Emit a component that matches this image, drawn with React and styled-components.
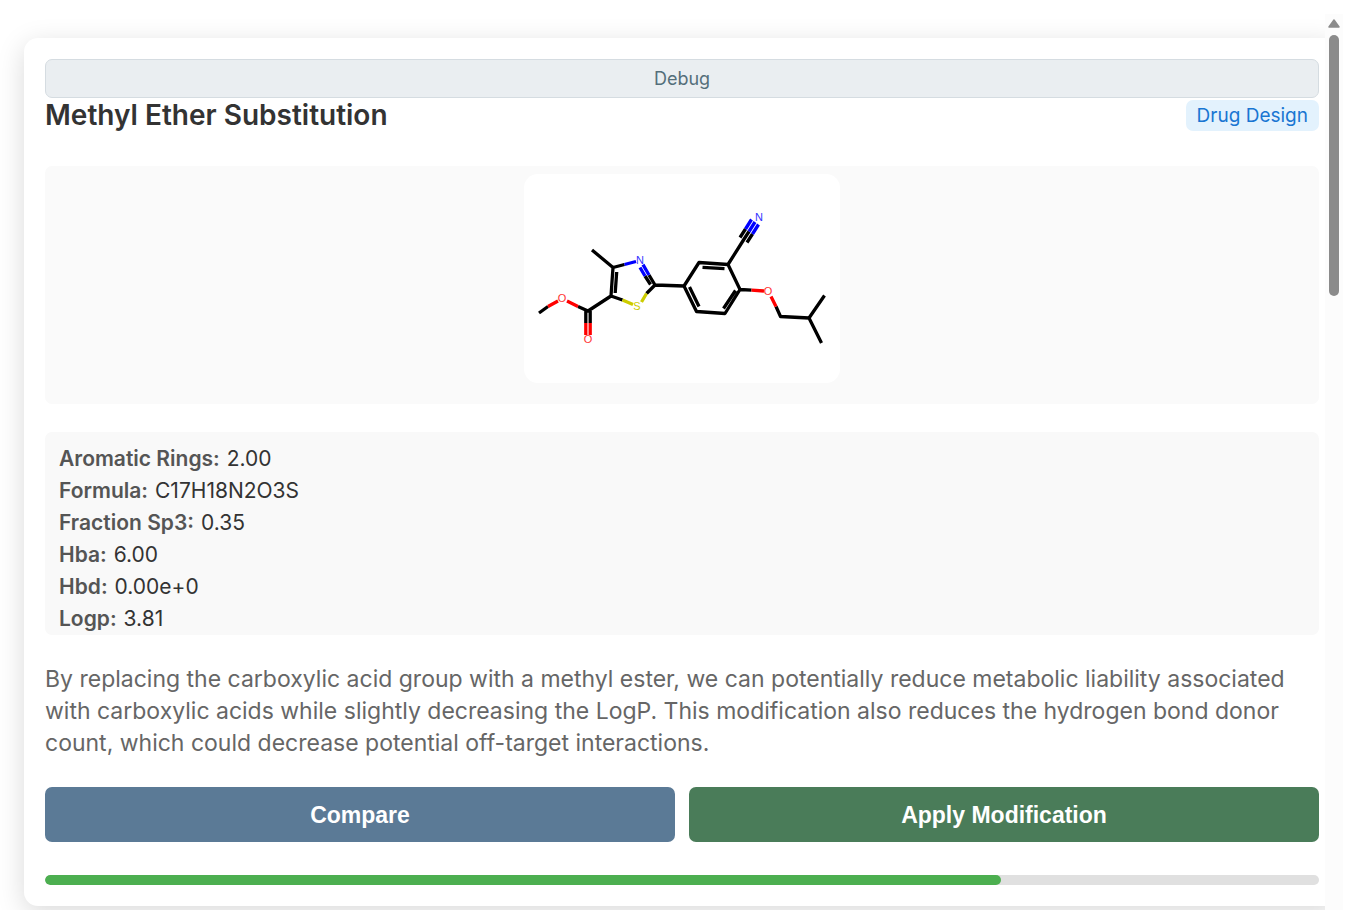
import React from "react";
import styled, { createGlobalStyle } from "styled-components";

const GlobalStyle = createGlobalStyle`
  *, *::before, *::after { box-sizing: border-box; }
  body {
    margin: 0;
    background: #ffffff;
    font-family: Inter, "Liberation Sans", sans-serif;
    color: #333333;
  }
`;

const Page = styled.div`
  display: flex;
  height: 100vh;
  padding-right: 19px;
  overflow: hidden;
`;

const Pane = styled.main`
  flex: 1;
  min-width: 0;
  padding: 38px 0 24px 24px;
  overflow: hidden;
`;

const ScrollTrack = styled.div`
  display: flex;
  flex-direction: column;
  align-items: center;
  width: 18px;
  margin-top: 14px;
  padding-top: 5px;
  gap: 7px;
  background: #fcfcfc;
`;

const ScrollThumb = styled.div`
  width: 10px;
  height: 261px;
  border-radius: 5px;
  background: #8b8b8b;
`;

const Card = styled.article`
  display: flex;
  flex-direction: column;
  margin-right: -15px;
  padding: 21px;
  border-radius: 14px;
  background: #ffffff;
  box-shadow: 0 7px 28px rgba(0, 0, 0, 0.15);
`;

const DebugButton = styled.button`
  height: 39px;
  padding: 0;
  border: 1px solid #d5dce1;
  border-radius: 7px;
  background: #eaeef1;
  color: #546e7a;
  font: 400 18px/24px Inter, sans-serif;
`;

const Header = styled.header`
  display: flex;
  align-items: center;
  justify-content: space-between;
  margin-bottom: 33px;
`;

const Title = styled.h3`
  margin: 0;
  font-size: 28px;
  line-height: 35px;
  font-weight: 600;
`;

const Badge = styled.span`
  padding: 3px 11px;
  border-radius: 7px;
  background: #e3f2fd;
  color: #1976d2;
  font-size: 19px;
  line-height: 25px;
`;

const Figure = styled.figure`
  display: flex;
  justify-content: center;
  margin: 0 0 28px;
  padding: 8px 0 21px;
  border-radius: 7px;
  background: #fafafa;
`;

const Structure = styled.svg`
  display: block;
  width: 316px;
  height: 209px;
  border-radius: 14px;
  background: #ffffff;
`;

const Properties = styled.dl`
  margin: 0 0 28px;
  padding: 11px 14px 0;
  border-radius: 7px;
  background: #f9f9f9;
  font-size: 21px;
  line-height: 32px;
`;

const Property = styled.div`
  display: flex;
  gap: 7px;
`;

const Term = styled.dt`
  color: #555555;
  font-weight: 600;
`;

const Value = styled.dd`
  margin: 0;
`;

const Description = styled.p`
  margin: 0 0 28px;
  color: #666666;
  font-size: 23px;
  line-height: 32px;
`;

const Actions = styled.div`
  display: flex;
  gap: 14px;
  margin-bottom: 33px;
`;

const ActionButton = styled.button`
  flex: 1;
  height: 55px;
  padding: 0;
  border: 0;
  border-radius: 7px;
  background: ${(p) => (p.$primary ? "#4a7c59" : "#5b7a96")};
  color: #ffffff;
  font: 700 23px/28px "Liberation Sans", Arial, sans-serif;
`;

const Progress = styled.div`
  height: 10px;
  border-radius: 5px;
  background: #e0e0e0;
  overflow: hidden;
`;

const ProgressFill = styled.div`
  height: 100%;
  border-radius: 5px;
  background: #4caf50;
`;

const properties = [
  ["Aromatic Rings", "2.00"],
  ["Formula", "C17H18N2O3S"],
  ["Fraction Sp3", "0.35"],
  ["Hba", "6.00"],
  ["Hbd", "0.00e+0"],
  ["Logp", "3.81"],
];

const bonds = [
  {
    color: "#000000",
    d: "M68 76L89 93.5L87 122L64 137L54 132.5M92.7 98L91.2 119M89 93.5L100.5 90.5M87 122L98.5 126M131 111L122.5 119.5M131 111L125 101M126.5 110.5L121 102M15 139L24 132.5M61.8 137V149M66.2 137V149M131 111L160 112L175 88.5L204 90.5L216 115.5L201 139.5L172.5 137.5L160 112M178.5 93.3L200.5 94.7M165.5 113L175 132.5M211.5 116.5L199.5 134.5M204 90.5L219.5 66L225 57.5M216 63.5L221.5 55M223 68.5L228.5 60M216 115.5L227.5 116.2M252 132.5L256.5 142.5L285 144L300.5 121.5M285 144L297.5 169",
  },
  {
    color: "#0000ff",
    d: "M100.5 90.5L112 87.5M125 101L119 90.7M121 102L116 93.5M225 57.5L231 48M221.5 55L227.5 45.5M228.5 60L234.5 50.5",
  },
  {
    color: "#ff0000",
    d: "M24 132.5L34 127M43 127L54 132.5M61.8 149V161M66.2 149V161M227.5 116.2L240 117M247 122.5L252 132.5",
  },
  { color: "#cccc00", d: "M98.5 126L109 130.5M122.5 119.5L117.5 128" },
];

const atoms = [
  { label: "N", x: 116, y: 90, color: "#3333ff" },
  { label: "S", x: 113, y: 136, color: "#cccc00" },
  { label: "O", x: 38, y: 128, color: "#ff3333" },
  { label: "O", x: 64, y: 169, color: "#ff3333" },
  { label: "N", x: 235, y: 47, color: "#3333ff" },
  { label: "O", x: 244, y: 121, color: "#ff3333" },
];

function Molecule() {
  return (
    <Structure viewBox="0 0 316 209" role="img" aria-label="Molecular structure">
      {bonds.map((b) => (
        <path
          key={b.color}
          d={b.d}
          stroke={b.color}
          strokeWidth="3.3"
          fill="none"
          strokeLinejoin="round"
        />
      ))}
      {atoms.map((a) => (
        <text
          key={`${a.x}-${a.y}`}
          x={a.x}
          y={a.y}
          fill={a.color}
          fontFamily="Liberation Sans, sans-serif"
          fontSize="11"
          textAnchor="middle"
        >
          {a.label}
        </text>
      ))}
    </Structure>
  );
}

export default function App() {
  const progress = 75;
  return (
    <>
      <GlobalStyle />
      <Page>
        <Pane>
          <Card>
            <DebugButton type="button">Debug</DebugButton>
            <Header>
              <Title>Methyl Ether Substitution</Title>
              <Badge>Drug Design</Badge>
            </Header>
            <Figure>
              <Molecule />
            </Figure>
            <Properties>
              {properties.map(([name, value]) => (
                <Property key={name}>
                  <Term>{name}:</Term>
                  <Value>{value}</Value>
                </Property>
              ))}
            </Properties>
            <Description>
              By replacing the carboxylic acid group with a methyl ester, we can potentially reduce metabolic
              liability associated with carboxylic acids while slightly decreasing the LogP. This modification
              also reduces the hydrogen bond donor count, which could decrease potential off-target
              interactions.
            </Description>
            <Actions>
              <ActionButton type="button">Compare</ActionButton>
              <ActionButton type="button" $primary>
                Apply Modification
              </ActionButton>
            </Actions>
            <Progress role="progressbar" aria-label="Progress" aria-valuenow={progress} aria-valuemin={0} aria-valuemax={100}>
              <ProgressFill style={{ width: `${progress}%` }} />
            </Progress>
          </Card>
        </Pane>
        <ScrollTrack aria-hidden="true">
          <svg width="12" height="9" viewBox="0 0 12 9">
            <path d="M6 1L11 8H1Z" fill="#8b8b8b" stroke="#8b8b8b" strokeWidth="1.5" strokeLinejoin="round" />
          </svg>
          <ScrollThumb />
        </ScrollTrack>
      </Page>
    </>
  );
}
